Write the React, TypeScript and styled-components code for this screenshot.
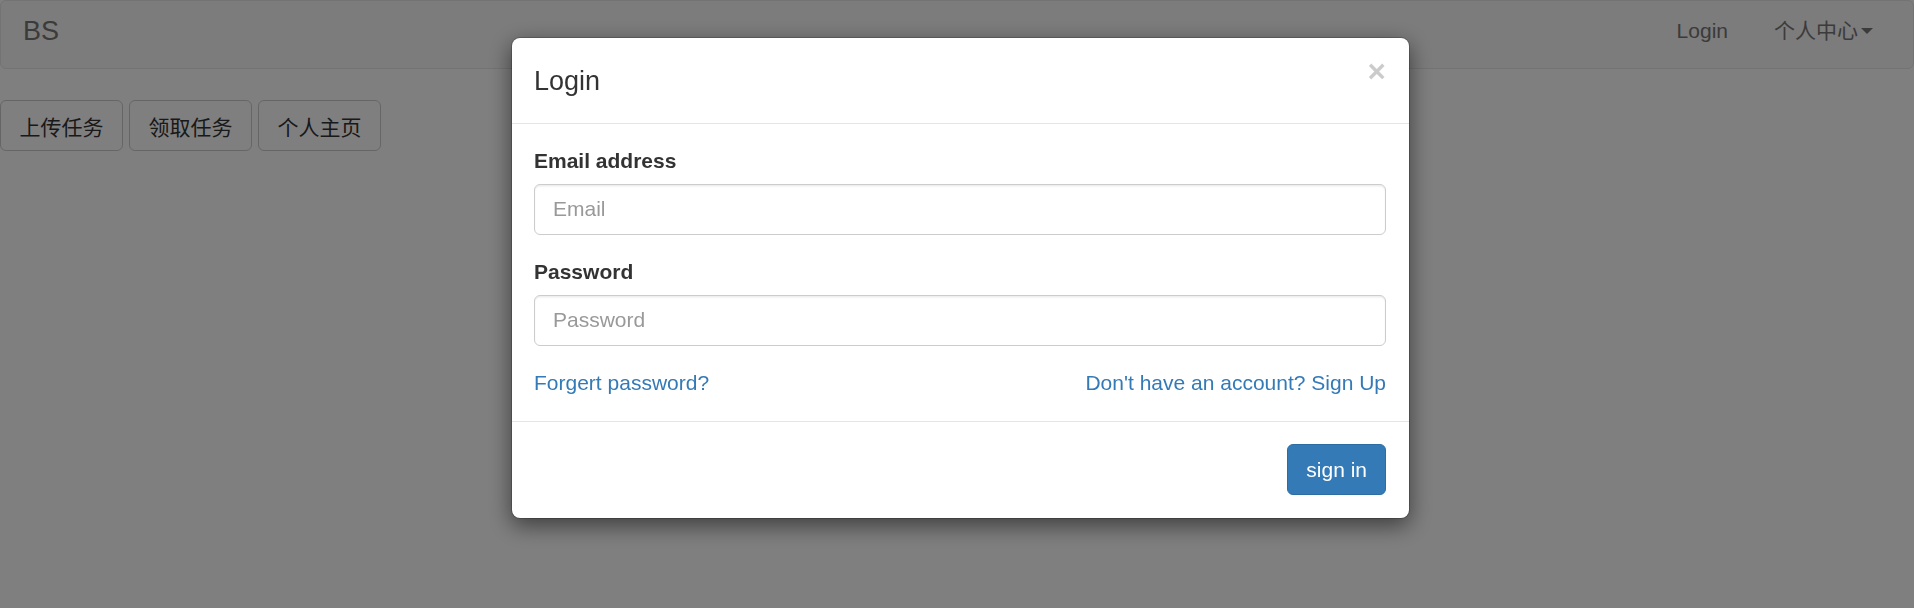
import React from "react";
import styled, { createGlobalStyle } from "styled-components";

const GlobalStyle = createGlobalStyle`
  html, body {
    margin: 0;
    padding: 0;
    background: #fff;
  }
  body {
    width: 1914px;
    height: 608px;
    overflow: hidden;
    font-family: "Liberation Sans", Arial, "Noto Sans CJK SC", sans-serif;
    font-size: 21px;
    line-height: 1.42857;
    color: #333;
  }
  * { box-sizing: border-box; }
`;

const Page = styled.div`
  position: relative;
  width: 1914px;
  height: 608px;
`;

const Navbar = styled.nav`
  display: flex;
  align-items: center;
  justify-content: space-between;
  height: 69px;
  padding: 0 40px 8px 22px;
  background: #f8f8f8;
  border: 1px solid #e7e7e7;
  border-radius: 6px;
  margin-bottom: 31px;
`;

const Brand = styled.a`
  font-size: 27px;
  line-height: 30px;
  color: #777;
  text-decoration: none;
`;

const NavLinks = styled.div`
  display: flex;
  align-items: center;
  gap: 46px;
`;

const NavLink = styled.a<{ $cjk?: boolean }>`
  display: flex;
  align-items: center;
  font-size: 21px;
  line-height: 30px;
  color: #777;
  text-decoration: none;
  margin-top: ${(p) => (p.$cjk ? "-4px" : "0")};
  font-family: ${(p) =>
    p.$cjk ? '"Noto Sans CJK SC", sans-serif' : '"Liberation Sans", Arial, sans-serif'};
`;

const Caret = styled.span`
  display: inline-block;
  width: 0;
  height: 0;
  margin-left: 3px;
  margin-top: 4px;
  border-top: 6px solid #777;
  border-left: 6px solid transparent;
  border-right: 6px solid transparent;
`;

const Toolbar = styled.div`
  display: flex;
  gap: 6px;
`;

const DefaultButton = styled.button`
  height: 51px;
  padding: 9px 18.5px;
  font-family: "Noto Sans CJK SC", sans-serif;
  font-size: 21px;
  line-height: 30px;
  color: #333;
  background: #fff;
  border: 1px solid #ccc;
  border-radius: 6px;
`;

const Backdrop = styled.div`
  position: fixed;
  inset: 0;
  background: rgba(0, 0, 0, 0.5);
  display: flex;
  justify-content: center;
  align-items: flex-start;
  padding-top: 37px;
`;

const Dialog = styled.div`
  width: 899px;
  margin-left: 6px;
  background: #fff;
  border: 1px solid rgba(0, 0, 0, 0.2);
  border-radius: 9px;
  box-shadow: 0 7px 22px rgba(0, 0, 0, 0.5);
  background-clip: padding-box;
`;

const Header = styled.div`
  display: flex;
  justify-content: space-between;
  align-items: flex-start;
  padding: 23.5px 22.5px 22.5px;
  border-bottom: 1px solid #e5e5e5;
`;

const Title = styled.h4`
  margin: 0;
  font-size: 27px;
  line-height: 38.5px;
  font-weight: 500;
  color: #333;
`;

const Close = styled.button`
  padding: 0;
  margin-top: -6px;
  background: transparent;
  border: 0;
  font-family: "Liberation Sans", Arial, sans-serif;
  font-size: 31.5px;
  font-weight: 700;
  line-height: 1;
  color: #000;
  opacity: 0.2;
`;

const Body = styled.div`
  padding: 22.5px;
`;

const FormGroup = styled.div`
  margin-bottom: 22.5px;
`;

const Label = styled.label`
  display: block;
  margin-bottom: 7.5px;
  font-weight: 700;
  line-height: 30px;
`;

const Input = styled.input`
  display: block;
  width: 100%;
  height: 51px;
  padding: 9px 18px;
  font-family: "Liberation Sans", Arial, sans-serif;
  font-size: 21px;
  line-height: 30px;
  color: #555;
  background: #fff;
  border: 1px solid #ccc;
  border-radius: 6px;
  box-shadow: inset 0 1.5px 1.5px rgba(0, 0, 0, 0.075);
  outline: none;
  &::placeholder {
    color: #999;
  }
`;

const LinkRow = styled.div`
  display: flex;
  justify-content: space-between;
  line-height: 30px;
`;

const TextLink = styled.a`
  color: #337ab7;
  text-decoration: none;
`;

const Footer = styled.div`
  display: flex;
  justify-content: flex-end;
  padding: 22.5px;
  border-top: 1px solid #e5e5e5;
`;

const PrimaryButton = styled.button`
  height: 51px;
  padding: 9px 18px;
  font-family: "Liberation Sans", Arial, sans-serif;
  font-size: 21px;
  line-height: 30px;
  color: #fff;
  background: #337ab7;
  border: 1px solid #2e6da4;
  border-radius: 6px;
`;

export default function App() {
  return (
    <>
      <GlobalStyle />
      <Page>
        <Navbar>
          <Brand href="#">BS</Brand>
          <NavLinks>
            <NavLink href="#">Login</NavLink>
            <NavLink href="#" $cjk>
              个人中心
              <Caret />
            </NavLink>
          </NavLinks>
        </Navbar>
        <Toolbar>
          <DefaultButton>上传任务</DefaultButton>
          <DefaultButton>领取任务</DefaultButton>
          <DefaultButton>个人主页</DefaultButton>
        </Toolbar>
        <Backdrop>
          <Dialog>
            <Header>
              <Title>Login</Title>
              <Close aria-label="Close">×</Close>
            </Header>
            <Body>
              <FormGroup>
                <Label>Email address</Label>
                <Input type="email" placeholder="Email" />
              </FormGroup>
              <FormGroup>
                <Label>Password</Label>
                <Input type="password" placeholder="Password" />
              </FormGroup>
              <LinkRow>
                <TextLink href="#">Forgert password?</TextLink>
                <TextLink href="#">Don't have an account? Sign Up</TextLink>
              </LinkRow>
            </Body>
            <Footer>
              <PrimaryButton>sign in</PrimaryButton>
            </Footer>
          </Dialog>
        </Backdrop>
      </Page>
    </>
  );
}
